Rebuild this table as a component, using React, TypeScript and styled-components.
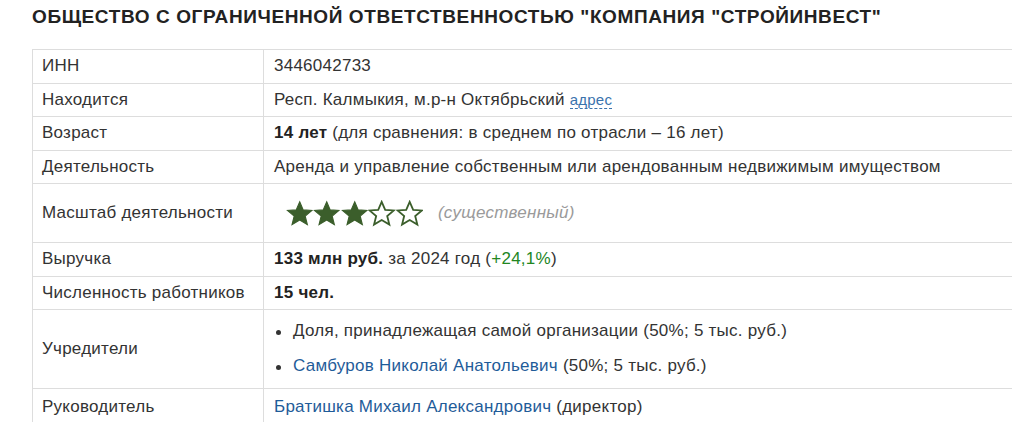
import styled, { createGlobalStyle } from "styled-components";

const GlobalStyle = createGlobalStyle`
  html, body {
    margin: 0;
    padding: 0;
    background: #fff;
    overflow: hidden;
  }
  body {
    font-family: "Liberation Sans", Arial, sans-serif;
    color: #333;
  }
`;

const Page = styled.main`
  padding: 5px 0 0 32px;
  width: 1060px;
`;

const Title = styled.h1`
  margin: 0 0 20px;
  font-size: 19px;
  letter-spacing: 0.6px;
  line-height: 24px;
  font-weight: bold;
  color: #222;
  text-transform: uppercase;
`;

const InfoTable = styled.table`
  width: 1040px;
  border-collapse: collapse;
  table-layout: fixed;
  font-size: 17px;
  letter-spacing: 0.25px;
  line-height: 22.5px;
`;

const Row = styled.tr<{ $height?: number }>`
  height: ${(p) => (p.$height ? `${p.$height}px` : "auto")};
`;

const Cell = styled.td<{ $label?: boolean }>`
  border: 1px solid #ddd;
  padding: 5px 10px 5px ${(p) => (p.$label ? "9px" : "10px")};
  vertical-align: middle;
  color: #333;
`;

const Strong = styled.b`
  color: #222;
`;

const Link = styled.a`
  color: #1f5c99;
  text-decoration: none;
`;

const AddressLink = styled.a`
  color: #3a73ad;
  font-size: 15px;
  text-decoration: none;
  border-bottom: 1px dashed #3a73ad;
`;

const Growth = styled.span`
  color: #22861f;
`;

const ScaleBox = styled.div`
  display: flex;
  align-items: center;
  height: 48px;
  padding-left: 12px;
`;

const Stars = styled.div`
  display: flex;
  margin-right: 15px;
`;

const Muted = styled.i`
  color: #9a9a9a;
`;

const FounderList = styled.ul`
  list-style: none;
  margin: 0;
  padding: 5px 0 6px;

  li {
    position: relative;
    padding-left: 19px;
  }

  li + li {
    margin-top: 12px;
  }

  li::before {
    content: "";
    position: absolute;
    left: 2px;
    top: 10px;
    width: 5px;
    height: 5px;
    border-radius: 50%;
    background: #333;
  }
`;

const Star: React.FC<{ filled: boolean }> = ({ filled }) => (
  <svg width="27.4" height="27" viewBox="0 0 24 24">
    <path
      d="M12 1.6l3.1 7.2 7.7.5-5.9 5 1.9 7.6L12 17.8l-6.8 4.1 1.9-7.6-5.9-5 7.7-.5z"
      fill={filled ? "#3b5e2b" : "#fff"}
      stroke="#3b5e2b"
      strokeWidth={filled ? 1 : 1.6}
      strokeLinejoin="miter"
    />
  </svg>
);

const rows: { label: string; value: React.ReactNode; height?: number }[] = [
  { label: "ИНН", value: "3446042733" },
  {
    label: "Находится",
    value: (
      <>
        Респ. Калмыкия, м.р-н Октябрьский <AddressLink href="#">адрес</AddressLink>
      </>
    ),
  },
  {
    label: "Возраст",
    value: (
      <>
        <Strong>14 лет</Strong> (для сравнения: в среднем по отрасли – 16 лет)
      </>
    ),
  },
  {
    label: "Деятельность",
    value: "Аренда и управление собственным или арендованным недвижимым имуществом",
  },
  {
    label: "Масштаб деятельности",
    value: (
      <ScaleBox>
        <Stars>
          {[0, 1, 2, 3, 4].map((i) => (
            <Star key={i} filled={i < 3} />
          ))}
        </Stars>
        <Muted>(существенный)</Muted>
      </ScaleBox>
    ),
  },
  {
    label: "Выручка",
    value: (
      <>
        <Strong>133 млн руб.</Strong> за 2024 год (<Growth>+24,1%</Growth>)
      </>
    ),
  },
  { label: "Численность работников", value: <Strong>15 чел.</Strong> },
  {
    label: "Учредители",
    value: (
      <FounderList>
        <li>Доля, принадлежащая самой организации (50%; 5 тыс. руб.)</li>
        <li>
          <Link href="#">Самбуров Николай Анатольевич</Link> (50%; 5 тыс. руб.)
        </li>
      </FounderList>
    ),
  },
  {
    label: "Руководитель",
    height: 38,
    value: (
      <>
        <Link href="#">Братишка Михаил Александрович</Link> (директор)
      </>
    ),
  },
];

const App: React.FC = () => {
  return (
    <>
      <GlobalStyle />
      <Page>
        <Title>Общество с ограниченной ответственностью "Компания "Стройинвест"</Title>
        <InfoTable>
          <colgroup>
            <col style={{ width: 231 }} />
            <col />
          </colgroup>
          <tbody>
            {rows.map((row) => (
              <Row key={row.label} $height={row.height}>
                <Cell $label>{row.label}</Cell>
                <Cell>{row.value}</Cell>
              </Row>
            ))}
          </tbody>
        </InfoTable>
      </Page>
    </>
  );
};

export default App;
